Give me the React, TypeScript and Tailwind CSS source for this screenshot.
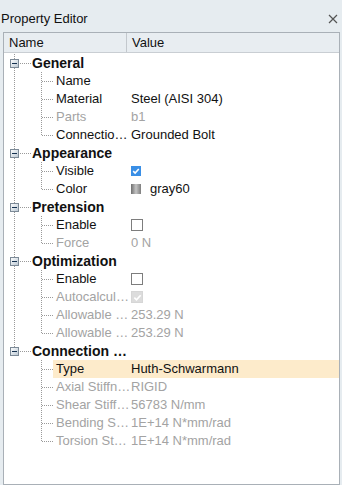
import type { ReactNode } from 'react';

type Child = {
  label: string;
  value?: ReactNode;
  disabled?: boolean;
  selected?: boolean;
};

type Group = { title: string; children: Child[] };

const BoxChecked = () => (
  <span className="flex h-[10px] w-[10px] items-center justify-center bg-[#3a8fe6]">
    <svg width="8" height="8" viewBox="0 0 8 8">
      <path d="M1.2 4.2 L3.1 6 L6.8 2" fill="none" stroke="#fff" strokeWidth="1.6" />
    </svg>
  </span>
);

const BoxEmpty = () => <span className="block h-[12px] w-[12px] border border-[#7d7d7d] bg-white" />;

const BoxDisabled = () => (
  <span className="flex h-[12px] w-[12px] items-center justify-center border border-[#d6d6d6] bg-[#dcdcdc]">
    <svg width="9" height="9" viewBox="0 0 8 8">
      <path d="M1.2 4.2 L3.1 6 L6.8 2" fill="none" stroke="#fff" strokeWidth="1.5" />
    </svg>
  </span>
);

const groups: Group[] = [
  {
    title: 'General',
    children: [
      { label: 'Name' },
      { label: 'Material', value: 'Steel (AISI 304)' },
      { label: 'Parts', value: 'b1', disabled: true },
      { label: 'Connectio…', value: 'Grounded Bolt' },
    ],
  },
  {
    title: 'Appearance',
    children: [
      { label: 'Visible', value: <BoxChecked /> },
      {
        label: 'Color',
        value: (
          <span className="flex items-center gap-[9px]">
            <span className="block h-[10px] w-[10px] bg-[linear-gradient(to_right,#6f6f6f,#c4c4c4_50%,#7e7e7e)]" />
            gray60
          </span>
        ),
      },
    ],
  },
  {
    title: 'Pretension',
    children: [
      { label: 'Enable', value: <BoxEmpty /> },
      { label: 'Force', value: '0 N', disabled: true },
    ],
  },
  {
    title: 'Optimization',
    children: [
      { label: 'Enable', value: <BoxEmpty /> },
      { label: 'Autocalcul…', value: <BoxDisabled />, disabled: true },
      { label: 'Allowable …', value: '253.29 N', disabled: true },
      { label: 'Allowable …', value: '253.29 N', disabled: true },
    ],
  },
  {
    title: 'Connection …',
    children: [
      { label: 'Type', value: 'Huth-Schwarmann', selected: true },
      { label: 'Axial Stiffn…', value: 'RIGID', disabled: true },
      { label: 'Shear Stiff…', value: '56783 N/mm', disabled: true },
      { label: 'Bending S…', value: '1E+14 N*mm/rad', disabled: true },
      { label: 'Torsion St…', value: '1E+14 N*mm/rad', disabled: true },
    ],
  },
];

const DOT = '#9a9a9a';

// outer gutter: top-level tree line with expander box
function GroupGutter({ last }: { last: boolean }) {
  return (
    <svg width="28" height="18" className="shrink-0" shapeRendering="crispEdges">
      <line x1="10.5" y1="0" x2="10.5" y2="5" stroke={DOT} strokeDasharray="1 1" />
      {!last && <line x1="10.5" y1="14" x2="10.5" y2="18" stroke={DOT} strokeDasharray="1 1" />}
      <line x1="16" y1="9.5" x2="27" y2="9.5" stroke={DOT} strokeDasharray="1 1" />
      <defs>
        <linearGradient id="bx" x1="0" y1="0" x2="1" y2="1">
          <stop offset="0" stopColor="#ffffff" />
          <stop offset="1" stopColor="#b9c6d2" />
        </linearGradient>
      </defs>
      <rect x="6.5" y="5.5" width="8" height="8" fill="url(#bx)" stroke="#7c8a97" />
      <line x1="8" y1="9.5" x2="13" y2="9.5" stroke="#14304f" />
    </svg>
  );
}

function ChildGutter({ lastGroup, lastChild }: { lastGroup: boolean; lastChild: boolean }) {
  return (
    <svg width="49" height="18" className="shrink-0" shapeRendering="crispEdges">
      {!lastGroup && <line x1="10.5" y1="0" x2="10.5" y2="18" stroke={DOT} strokeDasharray="1 1" />}
      <line x1="37.5" y1="0" x2="37.5" y2={lastChild ? 10 : 18} stroke={DOT} strokeDasharray="1 1" />
      <line x1="38" y1="9.5" x2="49" y2="9.5" stroke={DOT} strokeDasharray="1 1" />
    </svg>
  );
}

export default function App() {
  return (
    <div className="flex h-[485px] w-[342px] flex-col overflow-hidden bg-[#e6ecf0] font-['Liberation_Sans',Arial,sans-serif] text-[13px] text-[#111]">
      {/* Title bar */}
      <div className="flex h-[32px] shrink-0 items-center justify-between pl-[1px] pr-[4px] pt-[5px]">
        <span>Property Editor</span>
        <svg width="10" height="10" viewBox="0 0 10 10">
          <path d="M1 1 L9 9 M9 1 L1 9" stroke="#555" strokeWidth="1.2" />
        </svg>
      </div>

      {/* Panel */}
      <div className="ml-[3px] mr-[2px] flex-1 border border-[#a9b0b7] bg-white">
        <div className="flex h-[20px] items-center border-b border-[#c9ced3] bg-[#e8edf1]">
          <div className="flex h-full w-[123px] items-center border-r border-[#c3c8cd] pl-[5px]">Name</div>
          <div className="pl-[5px]">Value</div>
        </div>

        <div className="pt-[1px]">
          {groups.map((g, gi) => {
            const lastGroup = gi === groups.length - 1;
            return (
              <div key={g.title}>
                <div className="flex h-[18px] items-center">
                  <GroupGutter last={lastGroup} />
                  <span className="text-[14px] font-bold">{g.title}</span>
                </div>
                {g.children.map((c, ci) => (
                  <div key={ci} className="flex h-[18px] items-center">
                    <ChildGutter lastGroup={lastGroup} lastChild={ci === g.children.length - 1} />
                    <div
                      className={`flex h-full flex-1 items-center ${c.selected ? 'bg-[#fdebcb]' : ''} ${
                        c.disabled ? 'text-[#a3a3a3]' : ''
                      }`}
                    >
                      <span className="w-[78px] shrink-0 whitespace-nowrap pl-[3px]">{c.label}</span>
                      <span className="flex items-center whitespace-nowrap">{c.value}</span>
                    </div>
                  </div>
                ))}
              </div>
            );
          })}
        </div>
      </div>
    </div>
  );
}
